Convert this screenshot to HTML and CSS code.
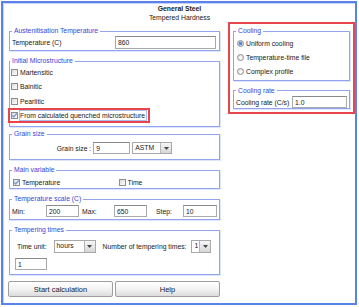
FILE: index.html
```html
<!DOCTYPE html>
<html lang="en">
<head>
<meta charset="UTF-8">
<title>General Steel - Tempered Hardness</title>
<link rel="stylesheet" href="styles.css">
</head>
<body>
<div class="window">
    <div class="heading">
        <div class="heading-title">General Steel</div>
        <div>Tempered Hardness</div>
    </div>

    <div class="columns">
        <div class="left-col">
            <fieldset class="group group-aus">
                <legend>Austenitisation Temperature</legend>
                <div class="row-split">
                    <span>Temperature (C)</span>
                    <input class="field field-aus" type="text" value="860">
                </div>
            </fieldset>

            <fieldset class="group group-micro">
                <legend>Initial Microstructure</legend>
                <div class="check-row"><span class="box"></span><span>Martensitic</span></div>
                <div class="check-row"><span class="box"></span><span>Bainitic</span></div>
                <div class="check-row"><span class="box"></span><span>Pearlitic</span></div>
                <div class="check-row check-hl">
                    <span class="box box-on"><svg width="7" height="7" viewBox="0 0 7 7"><path d="M1.2 3.4 L2.8 5 L5.9 1.4" fill="none" stroke="#7499cc" stroke-width="1.3"/></svg></span>
                    <span class="focus-text">From calculated quenched microstructure</span>
                </div>
            </fieldset>

            <fieldset class="group group-grain">
                <legend>Grain size</legend>
                <div class="row-center">
                    <span>Grain size :</span>
                    <input class="field field-grain" type="text" value="9">
                    <div class="combo combo-astm">
                        <span class="combo-text">ASTM</span>
                        <span class="combo-btn"><svg width="5" height="3" viewBox="0 0 5 3"><path d="M0 0 H5 L2.5 3 Z" fill="#444"/></svg></span>
                    </div>
                </div>
            </fieldset>

            <fieldset class="group group-main">
                <legend>Main variable</legend>
                <div class="row-halves">
                    <div class="check-row">
                        <span class="box box-on"><svg width="7" height="7" viewBox="0 0 7 7"><path d="M1.2 3.4 L2.8 5 L5.9 1.4" fill="none" stroke="#7499cc" stroke-width="1.3"/></svg></span>
                        <span>Temperature</span>
                    </div>
                    <div class="check-row check-second"><span class="box"></span><span>Time</span></div>
                </div>
            </fieldset>

            <fieldset class="group group-scale">
                <legend>Temperature scale (C)</legend>
                <div class="row-scale">
                    <span>Min:</span>
                    <input class="field field-scale" type="text" value="200">
                    <span>Max:</span>
                    <input class="field field-scale" type="text" value="650">
                    <span>Step:</span>
                    <input class="field field-step" type="text" value="10">
                </div>
            </fieldset>

            <fieldset class="group group-temper">
                <legend>Tempering times</legend>
                <div class="row-temper">
                    <span class="temper-label">Time unit:</span>
                    <div class="combo combo-hours">
                        <span class="combo-text">hours</span>
                        <span class="combo-btn"><svg width="5" height="3" viewBox="0 0 5 3"><path d="M0 0 H5 L2.5 3 Z" fill="#444"/></svg></span>
                    </div>
                    <span class="temper-label">Number of tempering times:</span>
                    <div class="combo combo-count">
                        <span class="combo-text">1</span>
                        <span class="combo-btn"><svg width="5" height="3" viewBox="0 0 5 3"><path d="M0 0 H5 L2.5 3 Z" fill="#444"/></svg></span>
                    </div>
                </div>
                <input class="field field-times" type="text" value="1">
            </fieldset>

            <div class="buttons">
                <button type="button" class="btn">Start calculation</button>
                <button type="button" class="btn">Help</button>
            </div>
        </div>

        <div class="right-col">
            <fieldset class="group group-cooling">
                <legend>Cooling</legend>
                <div class="radio-row"><span class="radio radio-on"></span><span>Uniform cooling</span></div>
                <div class="radio-row"><span class="radio"></span><span>Temperature-time file</span></div>
                <div class="radio-row"><span class="radio"></span><span>Complex profile</span></div>
            </fieldset>

            <fieldset class="group group-rate">
                <legend>Cooling rate</legend>
                <div class="row-split">
                    <span>Cooling rate (C/s)</span>
                    <input class="field field-rate" type="text" value="1.0">
                </div>
            </fieldset>
        </div>
    </div>
</div>
</body>
</html>
```

FILE: styles.css
```css
body {
    margin: 0;
    background-color: #ffffff;
    font-family: "Liberation Sans", Arial, sans-serif;
    font-size: 6.8px;
    color: #202020;
}

.window {
    margin: 1px;
    width: 356px;
    height: 304px;
    box-sizing: border-box;
    border: 2px solid #5b82ea;
    box-shadow: inset 1px 1px 0 #c8d4f7;
    padding: 0 5px 0 6px;
}

.heading {
    text-align: center;
    padding-top: 1px;
    line-height: 9px;
}

.heading-title {
    font-weight: bold;
}

.columns {
    display: flex;
    gap: 13px;
    margin-top: 5px;
    align-items: flex-start;
}

.left-col {
    width: 211px;
    display: flex;
    flex-direction: column;
    gap: 6px;
}

.right-col {
    width: 117px;
    display: flex;
    flex-direction: column;
    gap: 6px;
    outline: 2px solid #e8464c; /* highlight */
    outline-offset: 3px;
}

/* titled groups */
.group {
    margin: 0;
    padding: 0 2px;
    min-width: 0;
    border: 1px solid #93a4ee;
    box-shadow: 1px 1px 0 #dde4fb;
}

.group legend {
    padding: 0 2px;
    color: #3347d6;
    line-height: 8px;
}

.group-aus { padding-top: 1px; padding-bottom: 1px; }
.group-micro { padding-left: 0; padding-bottom: 3px; }
.group-grain { margin-top: -3px; padding-top: 4px; padding-bottom: 5px; }
.group-main { padding-top: 2px; }
.group-scale { padding-top: 2px; padding-bottom: 2px; }
.group-temper { padding-top: 6px; padding-bottom: 4px; }
.group-cooling { padding-top: 1.5px; padding-bottom: 1px; }
.group-rate { padding-top: 1.5px; }

/* inputs */
.field {
    box-sizing: border-box;
    height: 12px;
    margin: 0;
    padding: 0 2px;
    border: 1px solid #a9a9a9;
    border-top-color: #8a8a8a;
    background: #ffffff;
    font-family: inherit;
    font-size: 6.8px;
    color: #202020;
    outline: none;
}

.field-aus { width: 101px; height: 13px; margin-right: 1px; }
.field-grain { width: 37px; }
.field-scale { width: 33px; }
.field-step { width: 34px; }
.field-rate { width: 55px; }
.field-times { display: block; width: 32px; margin: 5px 0 0 3px; }

.row-split {
    display: flex;
    align-items: center;
    justify-content: space-between;
}

.row-center {
    display: flex;
    align-items: center;
    justify-content: center;
    gap: 2px;
    height: 12px;
}

/* combo boxes */
.combo {
    box-sizing: border-box;
    display: flex;
    height: 12px;
    border: 1px solid #a9a9a9;
    background: #ffffff;
}

.combo-astm { width: 40px; }
.combo-hours { width: 42px; height: 13px; }
.combo-count { width: 20px; height: 13px; }

.combo-text {
    flex: 1;
    padding-left: 2px;
    line-height: 10px;
}

.combo-btn {
    width: 10px;
    display: flex;
    align-items: center;
    justify-content: center;
    border-left: 1px solid #b5b5b5;
    background: linear-gradient(#f6f6f6, #d6d6d6);
}

/* check boxes */
.check-row {
    display: flex;
    align-items: center;
    gap: 2px;
    height: 14.5px;
    padding-left: 1px;
}

.box {
    box-sizing: border-box;
    width: 7px;
    height: 7px;
    border: 1px solid #8d8d8d;
    background: linear-gradient(135deg, #dcdcdc, #ffffff);
    display: flex;
    align-items: center;
    justify-content: center;
}

.box svg {
    flex: none;
}

.check-hl {
    width: max-content;
    height: 11px;
    margin: 1.75px 0;
    gap: 1px;
    padding-right: 1px;
    outline: 2px solid #e8464c; /* highlight */
}

.focus-text {
    border: 1px solid #a9bdef;
    line-height: 9px;
    padding-right: 1px;
}

.row-halves {
    display: grid;
    grid-template-columns: 1fr 1fr;
    height: 12px;
}

.row-halves .check-row {
    height: 12px;
}

.check-second {
    padding-left: 4px;
}

.row-scale {
    display: grid;
    grid-template-columns: 34px 36px 32px 42px 27px 34px;
    align-items: center;
    height: 12px;
}

.row-temper {
    display: flex;
    align-items: center;
    gap: 5px;
    height: 13px;
    padding-left: 5px;
}

.temper-label {
    padding: 0 2px 0 0;
}

.temper-label + .combo + .temper-label {
    padding: 0 0 0 2px;
}

/* radios */
.radio-row {
    display: flex;
    align-items: center;
    gap: 2px;
    height: 14px;
    padding-left: 1px;
}

.radio {
    box-sizing: border-box;
    width: 7px;
    height: 7px;
    border-radius: 50%;
    border: 1px solid #8d8d8d;
    background: radial-gradient(circle at 60% 60%, #ffffff, #d8d8d8);
}

.radio-on {
    background: radial-gradient(circle, #5b84d4 0 1.4px, #bcd0f2 2px, #ffffff 3px);
}

/* buttons */
.buttons {
    display: flex;
    gap: 2px;
    margin-left: -1px;
}

.btn {
    flex: 1;
    height: 16px;
    padding: 0;
    border: 1px solid #9e9e9e;
    border-radius: 2px;
    background: linear-gradient(#ffffff, #f3f3f3 50%, #dcdcdc);
    font-family: "Liberation Sans", Arial, sans-serif;
    font-size: 7.5px;
    color: #202020;
}
```
